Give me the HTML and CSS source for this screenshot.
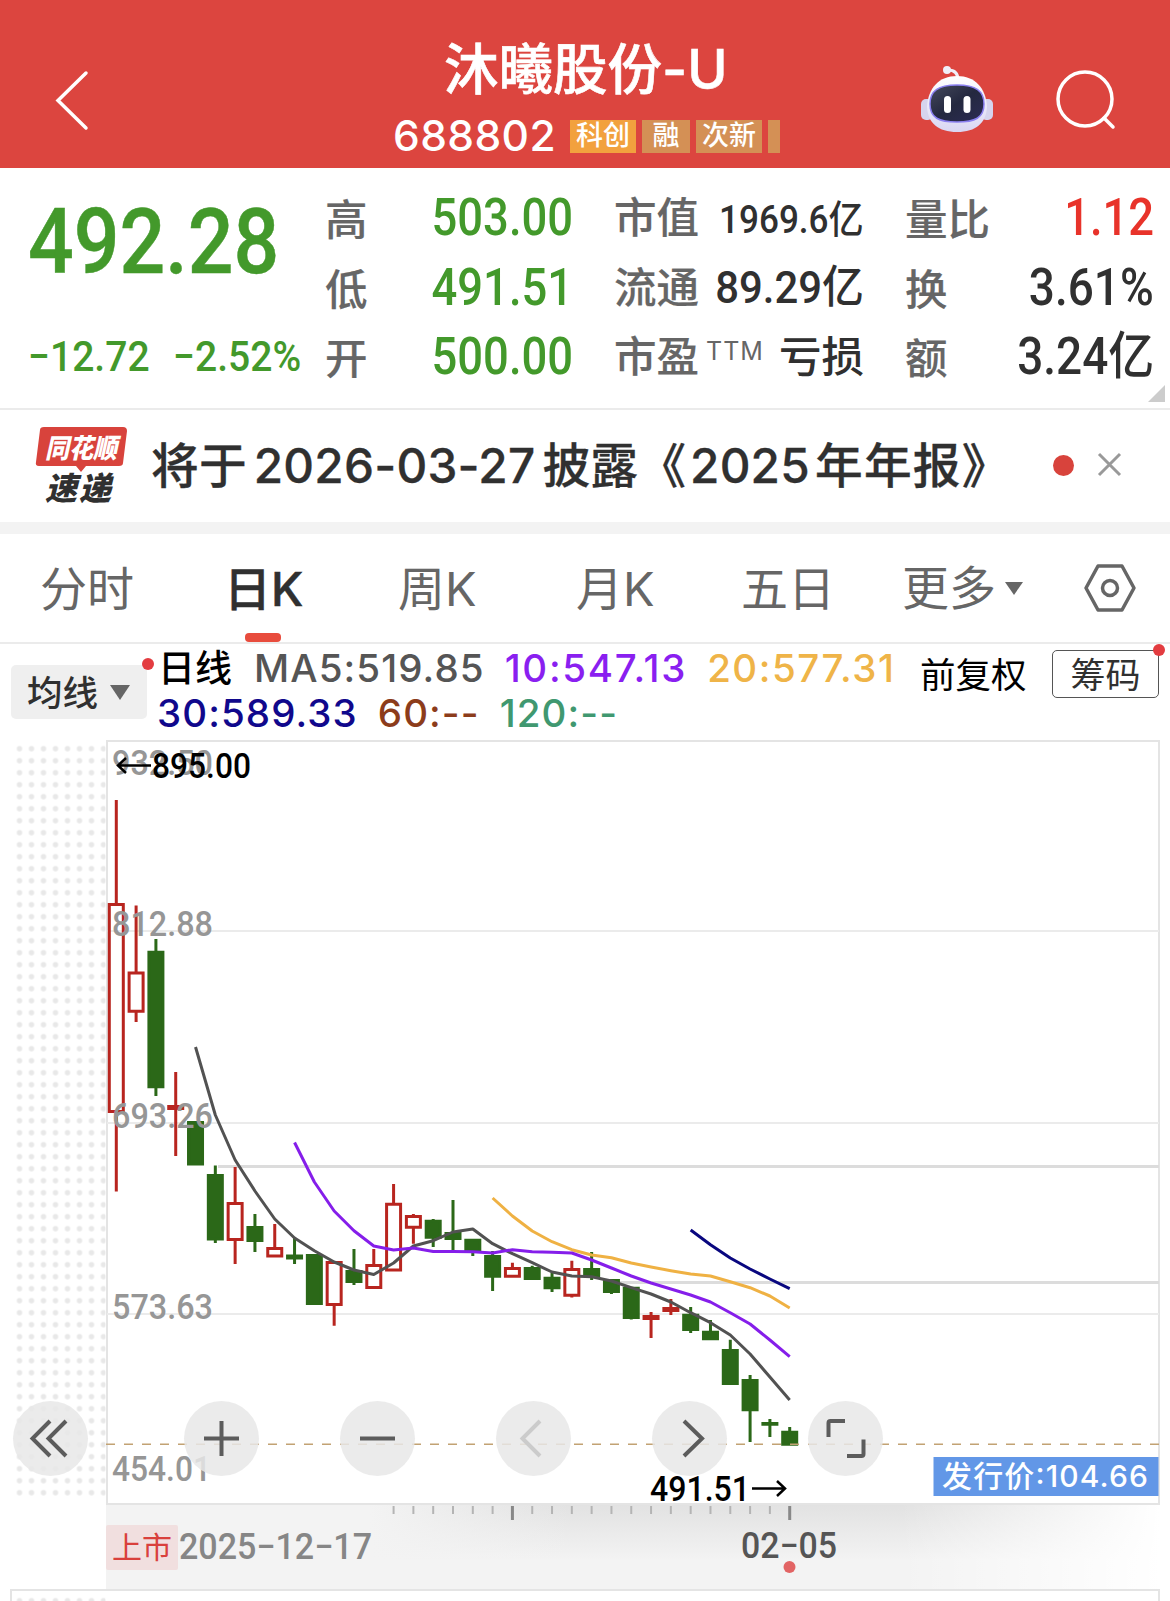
FILE: index.html
```html
<!DOCTYPE html>
<html lang="zh-CN">

<head>
    <meta charset="UTF-8">
    <meta name="viewport" content="width=device-width, initial-scale=1.0">
    <title>沐曦股份-U 688802</title>
    <link rel="stylesheet" href="styles.css">
</head>

<body>
    <header class="header">
        <svg class="back-icon" width="40" height="70" viewBox="0 0 40 70">
            <path d="M31 8 L3 35.500 L31 63" />
        </svg>
        <div class="stock">
            <div class="stock-name">沐曦股份-U</div>
            <div class="stock-info">
                <span class="stock-code">688802</span>
                <span class="tag tag-main">科创</span>
                <span class="tag tag-single">融</span>
                <span class="tag">次新</span>
                <span class="tag tag-cut"></span>
            </div>
        </div>
        <svg class="robot-icon" width="76" height="70" viewBox="0 0 76 70">
            <defs>
                <linearGradient id="shell" x1="0" y1="0" x2="0" y2="1">
                    <stop offset="0" stop-color="#ffffff" />
                    <stop offset="1" stop-color="#d9d6f3" />
                </linearGradient>
                <linearGradient id="face" x1="0" y1="0" x2="1" y2="1">
                    <stop offset="0" stop-color="#45495c" />
                    <stop offset="0.500" stop-color="#24283f" />
                    <stop offset="1" stop-color="#2c2b55" />
                </linearGradient>
            </defs>
            <path d="M29 5 Q39 5 39 15" fill="none" stroke="#f0eff8" stroke-width="3" />
            <circle cx="28" cy="5" r="4" fill="#f0eff8" />
            <rect x="2" y="34" width="12" height="21" rx="5" fill="#d6d4ee" />
            <rect x="62" y="34" width="12" height="21" rx="5" fill="#d6d4ee" />
            <path d="M38 11 C56 11 67 23 68 42 C67 58 57 67 38 67 C19 67 9 58 8 42 C9 23 20 11 38 11Z" fill="url(#shell)" />
            <path d="M38 20 C57 20 65 26 65 39 C65 53 56 57 38 57 C20 57 11 53 11 39 C11 26 19 20 38 20Z" fill="url(#face)" stroke="#8a7ff0" stroke-width="1.500" />
            <rect x="25" y="31" width="7" height="17" rx="3.500" fill="#fff" />
            <rect x="44.500" y="31" width="7" height="17" rx="3.500" fill="#fff" />
        </svg>
        <svg class="search-icon" width="62" height="62" viewBox="0 0 62 62">
            <circle cx="30" cy="29" r="27" />
            <path d="M49 48 L58 57" />
        </svg>
    </header>

    <section class="quote">
        <div class="price-box">
            <div class="price"><span class="num">492.28</span></div>
            <div class="change"><span class="num">−12.72</span><span class="num">−2.52%</span></div>
        </div>
        <div class="quote-col">
            <div class="quote-row"><label>高</label><span class="num green">503.00</span></div>
            <div class="quote-row"><label>低</label><span class="num green">491.51</span></div>
            <div class="quote-row"><label>开</label><span class="num green">500.00</span></div>
        </div>
        <div class="quote-col">
            <div class="quote-row"><label>市值</label><span class="num small">1969.6亿</span></div>
            <div class="quote-row"><label>流通</label><span class="num middle">89.29亿</span></div>
            <div class="quote-row"><label>市盈<span class="ttm">TTM</span></label><span class="cn">亏损</span></div>
        </div>
        <div class="quote-col">
            <div class="quote-row"><label>量比</label><span class="num red">1.12</span></div>
            <div class="quote-row"><label>换</label><span class="num">3.61%</span></div>
            <div class="quote-row"><label>额</label><span class="num">3.24亿</span></div>
        </div>
        <div class="corner"></div>
    </section>

    <section class="news">
        <svg class="news-logo" width="94" height="90" viewBox="0 0 94 90">
            <path d="M9 1 H88 Q92 1 92 5 L88 37 Q88 40 84 40 H51 L46 46 L41 40 H4 Q0 40 1 36 L5 4 Q5 1 9 1Z" fill="#d8433c" />
            <text class="logo-top" x="10" y="32" textLength="72" lengthAdjust="spacingAndGlyphs">同花顺</text>
            <text class="logo-bottom" x="10" y="74" textLength="66" lengthAdjust="spacing">速递</text>
        </svg>
        <div class="news-text">将于<span class="news-date">2026-03-27</span>披露《<span class="news-num">2025</span><span class="news-year">年年报》</span></div>
        <span class="news-dot"></span>
        <svg class="close-icon" width="25" height="25" viewBox="0 0 25 25">
            <path d="M2 2 L23 23 M23 2 L2 23" />
        </svg>
    </section>

    <nav class="tabs">
        <div class="tab">分时</div>
        <div class="tab active">日K</div>
        <div class="tab">周K</div>
        <div class="tab">月K</div>
        <div class="tab">五日</div>
        <div class="tab tab-more">更多<span class="arrow-down"></span></div>
        <svg class="setting-icon" width="52" height="48" viewBox="0 0 52 48">
            <path d="M14 2 H38 L50 24 L38 46 H14 L2 24Z" />
            <circle cx="26" cy="24" r="7.500" />
        </svg>
    </nav>

    <section class="indicator">
        <div class="ma-button"><span class="ma-label">均线</span><span class="arrow-down"></span><i class="dot"></i></div>
        <div class="ma-list">
            <div class="ma-line"><b>日线</b><span class="ma5">MA5:519.85</span><span class="ma10">10:547.13</span><span class="ma20">20:577.31</span></div>
            <div class="ma-line"><span class="ma30">30:589.33</span><span class="ma60">60:--</span><span class="ma120">120:--</span></div>
        </div>
        <div class="adjust">前复权</div>
        <div class="chip-button">筹码<i class="dot"></i></div>
    </section>

    <section class="chart-box">
        <svg class="chart" width="1170" height="861" viewBox="0 740 1170 861">
            <defs>
                <pattern id="dots" x="13.500" y="742.700" width="12" height="12" patternUnits="userSpaceOnUse">
                    <circle cx="6" cy="6" r="2.700" fill="#e8e8e8" />
                </pattern>
                <linearGradient id="axisShade" x1="0" y1="0" x2="0" y2="1">
                    <stop offset="0" stop-color="#e2e2e2" />
                    <stop offset="0.650" stop-color="#f3f3f3" />
                </linearGradient>
                <linearGradient id="axisLeft" x1="0" y1="0" x2="1" y2="0">
                    <stop offset="0" stop-color="#f3f3f3" />
                    <stop offset="1" stop-color="#f3f3f3" stop-opacity="0" />
                </linearGradient>
                <linearGradient id="axisRight" x1="0" y1="0" x2="1" y2="0">
                    <stop offset="0" stop-color="#fff" stop-opacity="0" />
                    <stop offset="1" stop-color="#fff" />
                </linearGradient>
            </defs>

            <rect x="13.500" y="742.700" width="92" height="756" fill="url(#dots)" />
            <rect class="frame" x="107" y="741" width="1052" height="763" />
            <path class="grid" d="M107 931 H1159 M107 1123 H1159 M107 1314 H1159" />
            <path class="gap-line" d="M218 1166.500 H1159 M614 1282.500 H1159" />

            <!-- 时间轴 -->
            <rect x="106" y="1505" width="1053" height="85" fill="#f3f3f3" />
            <rect x="370" y="1505" width="789" height="85" fill="url(#axisShade)" />
            <rect x="370" y="1505" width="200" height="85" fill="url(#axisLeft)" />
            <rect x="900" y="1505" width="260" height="85" fill="url(#axisRight)" />
            <g id="ticks"></g>
            <rect x="106" y="1525" width="72" height="45" rx="2" fill="#f1dfdf" />
            <text class="listed" x="112" y="1558" textLength="60">上市</text>
            <text class="axis" x="179" y="1559" textLength="193" lengthAdjust="spacingAndGlyphs">2025−12−17</text>
            <text class="axis now" x="741" y="1558" textLength="96" lengthAdjust="spacingAndGlyphs">02−05</text>
            <circle cx="789.500" cy="1567" r="6" fill="#e26464" />
            <rect x="11" y="1590" width="1148" height="30" fill="#fff" stroke="#e4e4e4" stroke-width="2" />
            <rect x="13.500" y="1594.700" width="92" height="10" fill="url(#dots)" />

            <g id="candles"></g>
            <path class="last-line" d="M106 1444.300 H1159" />
            <g id="lines"></g>

            <g class="scale">
                <text x="112" y="775" textLength="101" lengthAdjust="spacingAndGlyphs">932.50</text>
                <text x="112" y="936" textLength="101" lengthAdjust="spacingAndGlyphs">812.88</text>
                <text x="112" y="1127.500" textLength="101" lengthAdjust="spacingAndGlyphs">693.26</text>
                <text x="112" y="1319" textLength="101" lengthAdjust="spacingAndGlyphs">573.63</text>
                <text x="112" y="1480.500" textLength="99" lengthAdjust="spacingAndGlyphs">454.01</text>
            </g>
            <g class="mark">
                <text x="152" y="778" textLength="99" lengthAdjust="spacingAndGlyphs">895.00</text>
                <path d="M151 765.500 H118 M126 758 L118 765.500 L126 773" />
                <text x="650" y="1501" textLength="100" lengthAdjust="spacingAndGlyphs">491.51</text>
                <path d="M752 1488.500 H785 M777 1481 L785 1488.500 L777 1496" />
            </g>
            <rect x="933.500" y="1457" width="225" height="39" fill="#6297e7" />
            <text class="issue" x="942" y="1486.500" textLength="206" lengthAdjust="spacing">发行价:104.66</text>
        </svg>

        <div class="toolbar">
            <span class="tool tool-fold"><svg viewBox="0 0 75 75"><path d="M37 20 L19.500 37.500 L37 55 M53 20 L35.500 37.500 L53 55" /></svg></span>
            <span class="tool"><svg viewBox="0 0 75 75"><path d="M20 37.500 H55 M37.500 20 V55" /></svg></span>
            <span class="tool"><svg viewBox="0 0 75 75"><path d="M20 37.500 H55" /></svg></span>
            <span class="tool disabled"><svg viewBox="0 0 75 75"><path d="M44 20 L26.500 37.500 L44 55" /></svg></span>
            <span class="tool"><svg viewBox="0 0 75 75"><path d="M32 20 L50 37.500 L32 55" /></svg></span>
            <span class="tool"><svg viewBox="0 0 75 75"><path d="M20.500 36 V22 Q20.500 20 22.500 20 H37 M55.500 38.500 V53 Q55.500 55 53.500 55 H39" /></svg></span>
        </div>
    </section>

    <script src="chart.js"></script>
</body>

</html>
```

FILE: styles.css
```css
* {
    box-sizing: border-box;
}

body {
    margin: 0;
    width: 1170px;
    height: 1601px;
    overflow: hidden;
    background-color: #fff;
    color: #303030;
    font-family: Inter, "Noto Sans CJK SC", sans-serif;
}

/* 顶部标题 */
.header {
    display: grid;
    grid-template-columns: 394px 1fr 136px 62px;
    height: 168px;
    padding-right: 53px;
    background-color: #dc453f;
    color: #fff;
}

.back-icon {
    margin: 65px 0 0 55px;
}

.back-icon path,
.search-icon path,
.search-icon circle {
    fill: none;
    stroke: #fff;
    stroke-width: 3.500;
    stroke-linecap: round;
}

.stock {
    width: 386px;
}

.stock-name {
    width: 386px;
    height: 76px;
    margin-top: 31px;
    padding-left: 50px;
    font-size: 54.500px;
    font-weight: 500;
    line-height: 76px;
    white-space: nowrap;
    -webkit-text-stroke: 0.600px #fff;
}

.stock-info {
    display: flex;
    align-items: center;
    gap: 6px;
    height: 59px;
    overflow: hidden;
}

.stock-code {
    width: 170px;
    margin-left: -1px;
    margin-right: 1px;
    padding-bottom: 2px;
    font-size: 42.500px;
    font-weight: 500;
    letter-spacing: 0.400px;
}

.tag {
    flex: none;
    width: 66px;
    height: 33px;
    background-color: #d49055;
    font-size: 27px;
    font-weight: 500;
    line-height: 32px;
    text-align: center;
}

.tag-main {
    background-color: #f2a13e;
}

.tag-single {
    width: 48px;
}

.tag-cut {
    width: 12px;
}

.robot-icon {
    margin-top: 65px;
}

.search-icon {
    margin-top: 70px;
}

/* 行情 */
.quote {
    position: relative;
    display: grid;
    grid-template-columns: 256px 248px 250px 249px;
    column-gap: 41px;
    height: 242px;
    padding-left: 28px;
    border-bottom: 2px solid #ebebeb;
}

.quote-col {
    padding-top: 15px;
}

.quote-row {
    display: flex;
    justify-content: space-between;
    align-items: baseline;
    height: 69.500px;
    line-height: 69.500px;
    font-size: 51px;
    white-space: nowrap;
}

.quote-row label {
    color: #666;
    font-size: 42.500px;
    font-weight: 500;
    -webkit-text-stroke: 0.200px #666;
}

.num {
    display: inline-block;
    font-family: Roboto, "Noto Sans CJK SC", sans-serif;
    font-weight: 500;
    transform: scaleX(0.9);
    transform-origin: right center;
}

.green,
.red {
    transform: scaleX(0.89);
}

.small {
    font-size: 39px;
}

.middle {
    font-size: 45px;
    transform: scaleX(0.93);
}

.cn {
    font-size: 42.500px;
    font-weight: 500;
}

.ttm {
    margin-left: 7px;
    font-size: 25px;
    font-weight: 400;
    letter-spacing: 1px;
    line-height: 0;
    vertical-align: 12px;
    -webkit-text-stroke: 0;
}

.green,
.price,
.change {
    color: #43992b;
}

.red {
    color: #e8332a;
}

.price {
    height: 140px;
    font-size: 91px;
    line-height: 144px;
}

.price .num {
    transform: scaleX(0.885);
    transform-origin: left center;
    -webkit-text-stroke: 0.500px #43992b;
}

.change {
    display: flex;
    gap: 14px;
    font-size: 42px;
    line-height: 97px;
    white-space: nowrap;
}

.change .num {
    transform: scaleX(0.93);
    transform-origin: left center;
}

.corner {
    position: absolute;
    right: 5px;
    bottom: 6px;
    border-left: 17px solid transparent;
    border-bottom: 17px solid #ccc;
}

/* 公告 */
.news {
    display: flex;
    align-items: center;
    height: 124px;
    padding-left: 35px;
    border-bottom: 12px solid #f3f3f3;
}

.news-logo {
    flex: none;
    align-self: flex-start;
    margin-top: 16px;
}

.logo-top,
.logo-bottom {
    font-size: 27px;
    font-weight: 900;
    font-style: italic;
    fill: #fff;
}

.logo-bottom {
    font-size: 32px;
    fill: #303030;
}

.news-text {
    width: 924px;
    padding-left: 22px;
    padding-bottom: 7px;
    font-size: 47.700px;
    font-weight: 500;
    letter-spacing: 0.200px;
    white-space: nowrap;
    -webkit-text-stroke: 0.300px #303030;
}

.news-date {
    margin: 0 7px 0 7px;
}

.news-num {
    margin-left: 4px;
}

.news-year {
    margin-left: 5px;
    letter-spacing: 1.300px;
}

.news-dot {
    width: 21px;
    height: 21px;
    margin-bottom: 2px;
    border-radius: 50%;
    background-color: #d8433c;
}

.close-icon {
    margin: 0 0 3px 23px;
}

.close-icon path {
    fill: none;
    stroke: #999;
    stroke-width: 3;
}

/* 周期切换 */
.tabs {
    display: flex;
    align-items: center;
    height: 110px;
    padding-left: 40px;
    border-bottom: 2px solid #ebebeb;
    color: #666;
    font-size: 47px;
    line-height: 110px;
}

.tab {
    width: 178px;
    height: 108px;
    white-space: nowrap;
}

.tab:first-child {
    width: 184px;
}

.tab:nth-child(2) {
    width: 174px;
}

.tab:nth-child(4) {
    width: 165px;
}

.tab:nth-child(5) {
    width: 161px;
}

.active {
    position: relative;
    color: #303030;
    font-weight: 500;
    -webkit-text-stroke: 0.500px #303030;
}

.active::after {
    content: "";
    position: absolute;
    left: 21px;
    bottom: 0;
    width: 36px;
    height: 9px;
    border-radius: 4px;
    background-color: #e84c3d;
}

.tab-more {
    display: flex;
    align-items: center;
    width: 182px;
}

.arrow-down {
    display: inline-block;
    margin-left: 9px;
    border: 9px solid transparent;
    border-top: 13px solid #666;
    border-bottom: 0;
}

.setting-icon path,
.setting-icon circle {
    fill: none;
    stroke: #666;
    stroke-width: 3.500;
    stroke-linejoin: round;
}

/* 均线指标 */
.indicator {
    display: flex;
    height: 96px;
    padding-left: 11px;
}

.ma-button,
.chip-button {
    position: relative;
    display: flex;
    align-items: center;
}

.ma-button {
    width: 136px;
    height: 54px;
    margin-top: 21px;
    padding-left: 16px;
    border-radius: 5px;
    background-color: #efefef;
    font-size: 35.500px;
    font-weight: 500;
    white-space: nowrap;
}

.ma-label {
    padding-bottom: 4px;
}

.ma-button .arrow-down {
    margin-left: 12px;
    border-width: 15px 10.500px 0;
}

.dot {
    position: absolute;
    right: -7px;
    top: -7px;
    width: 12px;
    height: 12px;
    border-radius: 50%;
    background-color: #e33c40;
}

.ma-list {
    width: 773px;
    padding-left: 10px;
    font-size: 38.500px;
    font-weight: 500;
    letter-spacing: 1.100px;
    white-space: nowrap;
}

.ma-line {
    display: flex;
    align-items: baseline;
    gap: 20px;
    height: 45px;
    line-height: 49px;
}

.ma-line b {
    margin: 0 2px 0 1px;
    color: #000;
    font-size: 37px;
    font-weight: 500;
    letter-spacing: 0;
}

.ma5 {
    color: #555;
}

.ma10 {
    color: #8a1ff0;
    letter-spacing: 1.700px;
}

.ma20 {
    color: #efb448;
    letter-spacing: 1.500px;
}

.ma30 {
    color: #10088c;
}

.ma60 {
    color: #8c3c1b;
}

.ma120 {
    color: #409870;
}

.adjust {
    width: 132px;
    color: #000;
    font-size: 35.500px;
    line-height: 63px;
}

.chip-button {
    justify-content: center;
    width: 107px;
    height: 48px;
    margin-top: 6px;
    padding-bottom: 4px;
    border: 1.500px solid #555;
    border-radius: 5px;
    font-size: 35px;
}

/* K线图 */
.chart-box {
    position: relative;
    height: 861px;
}

.chart {
    display: block;
}

.frame {
    fill: none;
    stroke: #e4e4e4;
    stroke-width: 2;
}

.grid {
    stroke: #ebebeb;
    stroke-width: 2;
}

.gap-line {
    stroke: #dcdcdc;
    stroke-width: 3;
}

.last-line {
    stroke: #c2a273;
    stroke-width: 1.500;
    stroke-dasharray: 9 9;
}

.tick {
    stroke: #b4b4b4;
    stroke-width: 2;
}

.tick-big {
    stroke: #888;
    stroke-width: 3;
}

.candle-up {
    fill: none;
    stroke: #b8251f;
    stroke-width: 3;
}

.candle-down {
    fill: #2b6818;
    stroke: #2b6818;
    stroke-width: 3;
}

.ma-path {
    fill: none;
    stroke-width: 3;
    stroke-linejoin: round;
}

.scale {
    fill: #969696;
    font: 500 35px Roboto, sans-serif;
}

.mark {
    fill: #000;
    font: 500 35px Roboto, sans-serif;
}

.mark path {
    fill: none;
    stroke: #000;
    stroke-width: 2.500;
}

.axis {
    fill: #868686;
    font: 500 36px Roboto, sans-serif;
}

.now {
    fill: #555;
}

.listed {
    fill: #d9403c;
    font-size: 30px;
}

.issue {
    fill: #fff;
    font-size: 30px;
    font-weight: 500;
}

.toolbar {
    position: absolute;
    left: 13px;
    top: 661px;
    display: flex;
    gap: 81px;
}

.tool {
    width: 75px;
    height: 75px;
    border-radius: 50%;
    background-color: rgba(232, 232, 232, 0.85);
}

.tool-fold {
    margin-right: 15px;
}

.tool path {
    fill: none;
    stroke: #5c5c5c;
    stroke-width: 4;
}

.disabled path {
    stroke: #cbcbcb;
}
```

FILE: chart.js
```js
const SVG_NS = 'http://www.w3.org/2000/svg';
const START_X = 116.3;
const STEP = 19.806;

// 每根K线: [方向, 最高, 实体上沿, 实体下沿, 最低]，r=涨 g=跌
const candles = [
    ['r', 800, 903, 1113, 1191.5], ['r', 905.5, 971.5, 1012.7, 1022], ['g', 939, 950.7, 1088.3, 1096],
    ['r', 1072, 1105, 1110, 1156], ['g', 1121, 1121, 1165.5, 1165.5], ['g', 1165.5, 1174, 1240.5, 1243],
    ['r', 1167, 1202, 1241, 1264], ['g', 1214, 1226, 1242, 1252], ['r', 1224, 1247, 1257.5, 1257.5],
    ['g', 1237, 1254.5, 1259.5, 1264], ['g', 1254, 1254, 1305, 1305], ['r', 1261, 1261, 1306, 1325.7],
    ['g', 1249, 1270, 1283, 1285], ['r', 1249, 1264, 1289, 1289], ['r', 1184, 1202.7, 1271.5, 1271.5],
    ['r', 1214, 1215, 1228.7, 1243.7], ['g', 1219, 1219.7, 1238.7, 1247], ['g', 1200, 1232, 1240, 1250],
    ['g', 1238.7, 1238.7, 1252.5, 1256], ['g', 1251, 1255, 1277.7, 1291], ['r', 1262.7, 1267, 1277.7, 1277.7],
    ['g', 1265.7, 1267, 1280, 1280], ['g', 1272.7, 1276.7, 1289.3, 1292], ['r', 1260.7, 1268, 1296.7, 1297.5],
    ['g', 1252, 1268, 1277, 1280], ['g', 1279, 1279, 1293, 1294], ['g', 1286.7, 1286.7, 1319, 1319.5],
    ['r', 1312, 1315, 1320, 1338], ['r', 1299, 1307, 1312, 1315], ['g', 1307, 1313.7, 1331, 1333],
    ['g', 1320, 1330.7, 1340.3, 1340.3], ['g', 1339.7, 1349, 1385, 1385], ['g', 1375, 1379, 1411.3, 1442],
    ['g', 1419, 1422, 1425.7, 1437], ['g', 1427, 1430.7, 1445.7, 1445.7]
];

const averages = [
    { start: 19, color: '#efb143', points: [1198, 1216, 1231, 1241.7, 1249.7, 1255, 1257.7, 1263, 1267, 1270.7, 1274, 1276, 1281.7, 1287.7, 1296, 1308] },
    { start: 4, color: '#525252', points: [1047, 1115, 1160, 1191, 1219, 1238, 1250.7, 1262, 1270, 1274.5, 1263, 1246, 1240.7, 1232, 1229, 1243.7, 1253.7, 1262.7, 1272, 1276, 1276.7, 1281, 1287.7, 1294, 1302, 1312.7, 1322.7, 1335, 1354, 1377, 1400] },
    { start: 9, color: '#851eea', points: [1142.5, 1182, 1211, 1230.7, 1246, 1250, 1248, 1251.5, 1251.5, 1251.7, 1253, 1249.7, 1251.7, 1252.3, 1253, 1260, 1268, 1276, 1283, 1289, 1295, 1302, 1312.7, 1324, 1340, 1356.7] },
    { start: 29, color: '#09077f', points: [1230, 1244.7, 1258, 1269, 1279, 1288.7] }
];

function addPath(parentId, className, d, color) {
    const path = document.createElementNS(SVG_NS, 'path');
    path.setAttribute('class', className);
    path.setAttribute('d', d);
    if (color) {
        path.setAttribute('stroke', color);
    }
    document.getElementById(parentId).appendChild(path);
}

const getX = (index) => START_X + index * STEP;

candles.forEach(([type, high, top, bottom, low], index) => {
    const x = getX(index);
    // 描边宽度为3，实体向内收1.5
    const t = top + 1.5;
    const b = Math.max(bottom - 1.5, t);
    let d = `M${x - 7} ${t} H${x + 7} V${b} H${x - 7} Z`;
    if (high < top) d += ` M${x} ${high} V${t}`;
    if (low > bottom) d += ` M${x} ${b} V${low}`;
    addPath('candles', type === 'r' ? 'candle-up' : 'candle-down', d);
});

averages.forEach(({ start, color, points }) => {
    const d = points.map((y, i) => `${i ? 'L' : 'M'}${getX(start + i)} ${y}`).join(' ');
    addPath('lines', 'ma-path', d, color);
});

// 时间轴刻度
for (let i = 14; i < 35; i++) {
    const big = i === 20 || i === 34;
    addPath('ticks', big ? 'tick-big' : 'tick', `M${getX(i)} 1506 V${big ? 1520 : 1514}`);
}
```
